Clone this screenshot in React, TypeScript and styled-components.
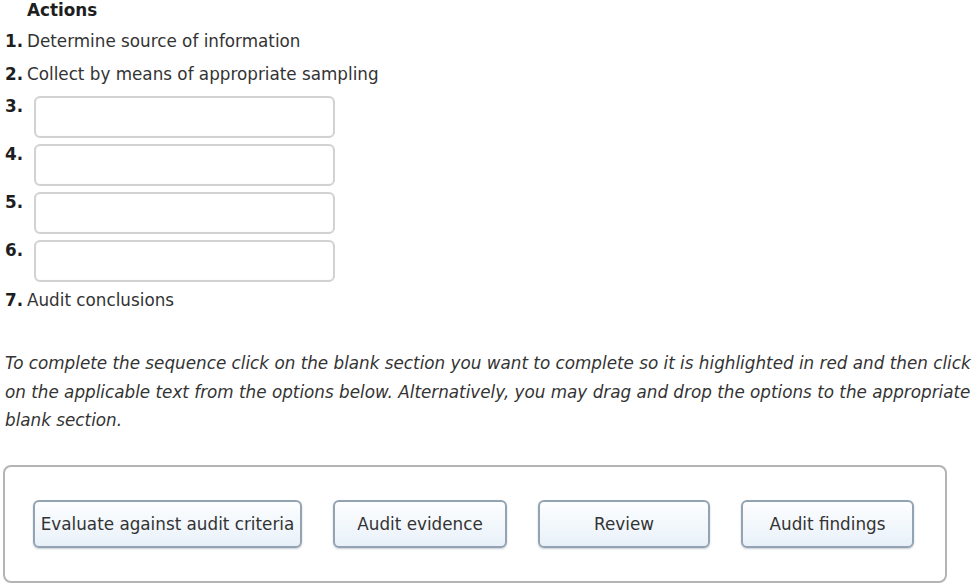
import React from "react";
import styled, { createGlobalStyle } from "styled-components";

const GlobalStyle = createGlobalStyle`
  html, body {
    margin: 0;
    padding: 0;
    background: #ffffff;
  }
  body {
    font-family: "DejaVu Sans", Verdana, sans-serif;
    color: #333333;
  }
`;

const Page = styled.div`
  width: 974px;
  height: 583px;
  overflow: hidden;
  padding-left: 5px;
  box-sizing: border-box;
`;

const Title = styled.div`
  font-weight: bold;
  font-size: 16.8px;
  line-height: 20px;
  color: #1e1e1e;
  padding-left: 22px;
  margin-bottom: 4px;
`;

const List = styled.div`
  display: flex;
  flex-direction: column;
`;

const TextRow = styled.div<{ $gap?: number }>`
  display: flex;
  align-items: center;
  height: 33px;
  font-size: 16.8px;
  margin-top: ${(p) => p.$gap ?? 0}px;
`;

const BlankRow = styled.div`
  display: flex;
  align-items: flex-start;
  margin-top: 6px;
`;

const Num = styled.span<{ $width: number }>`
  flex: none;
  width: ${(p) => p.$width}px;
  font-weight: bold;
  font-size: 16.8px;
  line-height: 20px;
  color: #1e1e1e;
`;

const Blank = styled.div`
  width: 301px;
  height: 42px;
  box-sizing: border-box;
  border: 2px solid #d2d2d2;
  border-radius: 6px;
  background: #ffffff;
  box-shadow: inset 0 0 1px #e4e4e4;
`;

const Instructions = styled.p`
  margin: 33px 0 0 0;
  font-style: italic;
  font-size: 16.8px;
  line-height: 28.5px;
  color: #333333;
  white-space: nowrap;
`;

const OptionsPanel = styled.div`
  margin: 30px 0 0 -2px;
  width: 944px;
  box-sizing: border-box;
  border: 2px solid #b4b4b4;
  border-radius: 8px;
  padding: 33px 0 33px 28px;
  display: flex;
  gap: 31px;
`;

const Option = styled.button<{ $width: number }>`
  flex: none;
  width: ${(p) => p.$width}px;
  height: 48px;
  box-sizing: border-box;
  border: 2px solid #93a3b1;
  border-radius: 6px;
  background: linear-gradient(#fdfeff, #e8f1f9);
  box-shadow: 0 1px 2px rgba(90, 110, 130, 0.35);
  font-family: "DejaVu Sans", Verdana, sans-serif;
  font-size: 16.8px;
  color: #333333;
  padding: 0 2px;
  white-space: nowrap;
  cursor: pointer;
`;

const steps: { n: number; text?: string }[] = [
  { n: 1, text: "Determine source of information" },
  { n: 2, text: "Collect by means of appropriate sampling" },
  { n: 3 },
  { n: 4 },
  { n: 5 },
  { n: 6 },
  { n: 7, text: "Audit conclusions" },
];

const options = [
  { label: "Evaluate against audit criteria", width: 269 },
  { label: "Audit evidence", width: 174 },
  { label: "Review", width: 172 },
  { label: "Audit findings", width: 173 },
];

export default function App() {
  return (
    <>
      <GlobalStyle />
      <Page>
        <Title>Actions</Title>
        <List>
          {steps.map((s) =>
            s.text ? (
              <TextRow key={s.n} $gap={s.n === 7 ? 1 : 0}>
                <Num $width={22}>{s.n}.</Num>
                {s.text}
              </TextRow>
            ) : (
              <BlankRow key={s.n}>
                <Num $width={29}>{s.n}.</Num>
                <Blank />
              </BlankRow>
            )
          )}
        </List>
        <Instructions>
          To complete the sequence click on the blank section you want to complete so it is highlighted in red and then click
          <br />
          on the applicable text from the options below. Alternatively, you may drag and drop the options to the appropriate
          <br />
          blank section.
        </Instructions>
        <OptionsPanel>
          {options.map((o) => (
            <Option key={o.label} $width={o.width}>
              {o.label}
            </Option>
          ))}
        </OptionsPanel>
      </Page>
    </>
  );
}
